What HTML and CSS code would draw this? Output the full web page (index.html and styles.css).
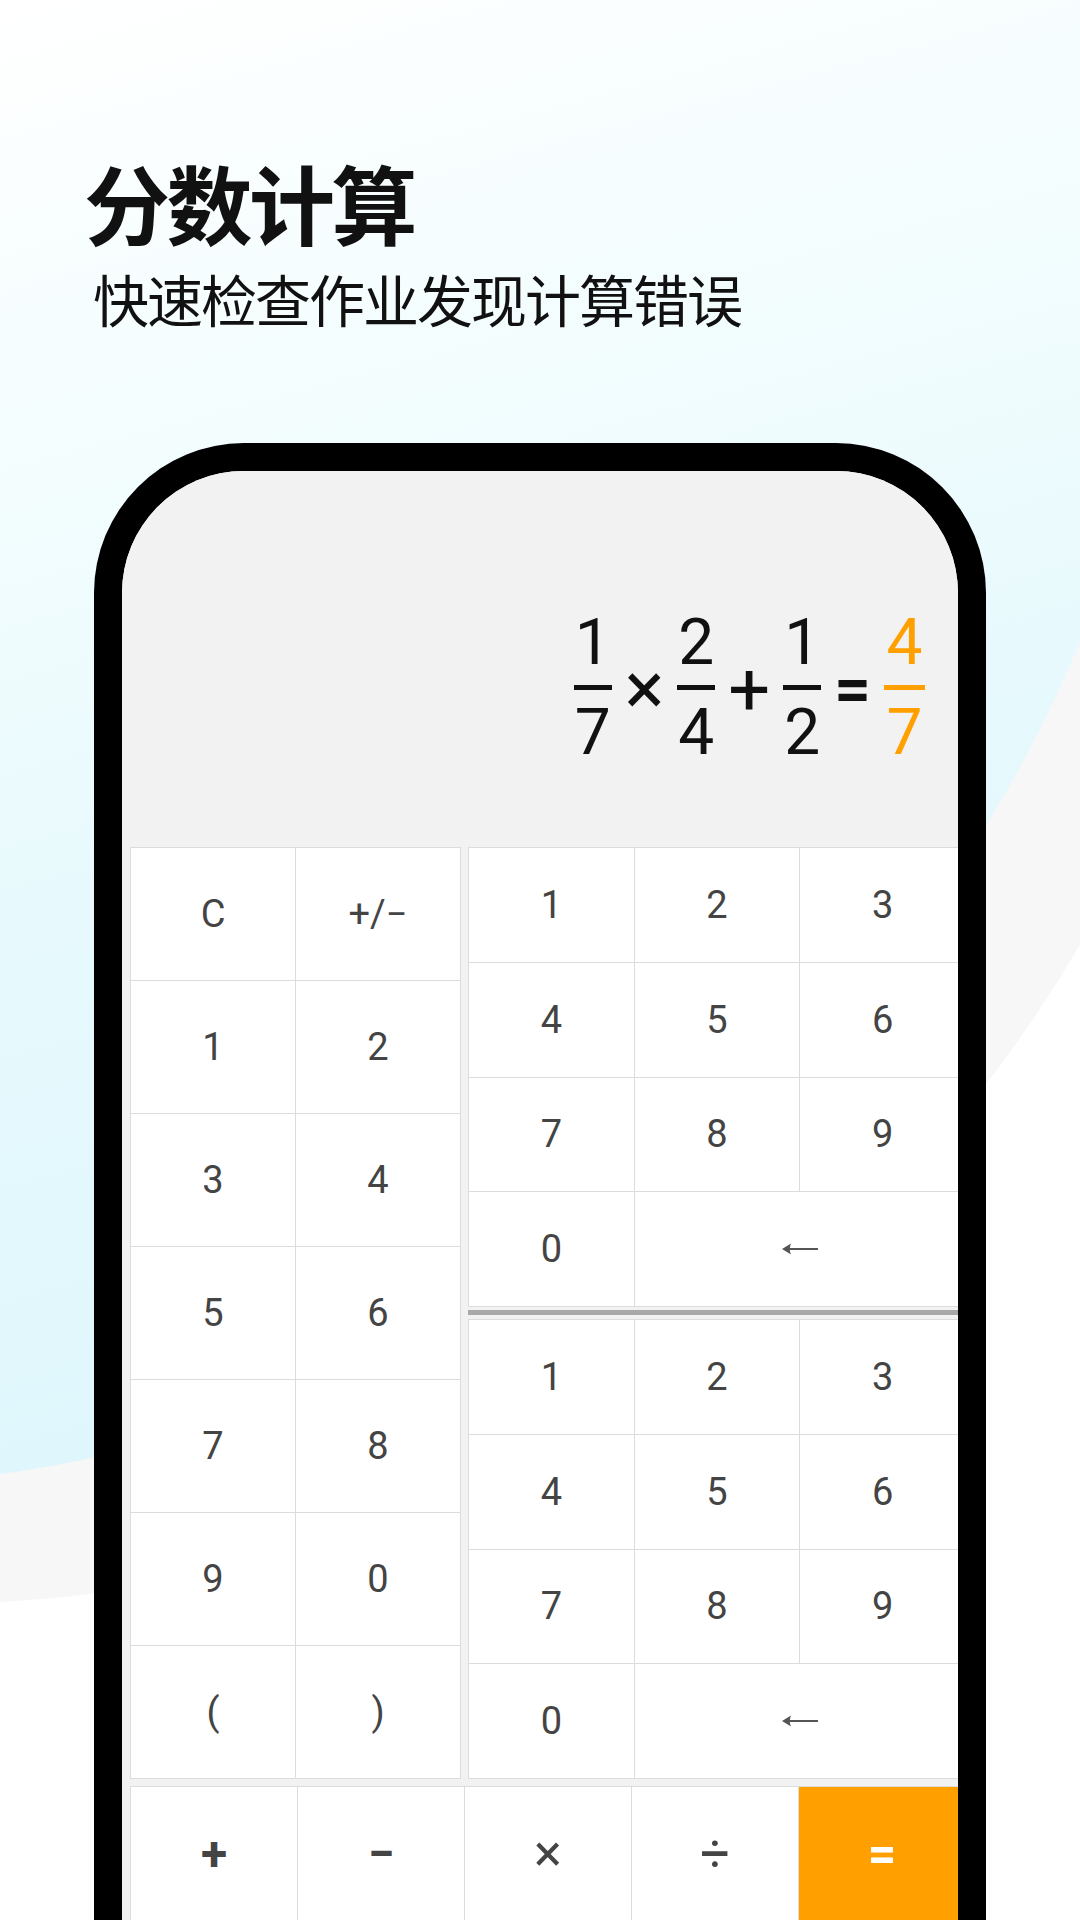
FILE: index.html
```html
<!DOCTYPE html>
<html lang="zh-CN">
<head>
<meta charset="utf-8">
<title>分数计算</title>
<link rel="stylesheet" href="styles.css">
</head>
<body>
<div class="page">
  <header class="header">
    <h1 class="title">分数计算</h1>
    <p class="subtitle">快速检查作业发现计算错误</p>
  </header>

  <div class="phone">
    <div class="screen">
      <div class="display">
        <div class="expr">
          <span class="frac"><span class="num">1</span><span class="bar"></span><span class="den">7</span></span>
          <span class="op op-times">×</span>
          <span class="frac"><span class="num">2</span><span class="bar"></span><span class="den">4</span></span>
          <span class="op op-plus">+</span>
          <span class="frac"><span class="num">1</span><span class="bar"></span><span class="den">2</span></span>
          <span class="op op-eq">=</span>
          <span class="frac result"><span class="num">4</span><span class="bar"></span><span class="den">7</span></span>
        </div>
      </div>

      <div class="keypad">
        <div class="main">
          <div class="left">
            <div class="key">C</div><div class="key">+/−</div>
            <div class="key">1</div><div class="key">2</div>
            <div class="key">3</div><div class="key">4</div>
            <div class="key">5</div><div class="key">6</div>
            <div class="key">7</div><div class="key">8</div>
            <div class="key">9</div><div class="key">0</div>
            <div class="key">(</div><div class="key">)</div>
          </div>
          <div class="right">
            <div class="block">
              <div class="key">1</div><div class="key">2</div><div class="key">3</div>
              <div class="key">4</div><div class="key">5</div><div class="key">6</div>
              <div class="key">7</div><div class="key">8</div><div class="key">9</div>
              <div class="key">0</div>
              <div class="key wide"><svg class="arrow" viewBox="0 0 38 16" width="38" height="16"><path d="M1 8 L10 2.5 Q7.5 8 10 13.5 Z" fill="#555"/><path d="M6 8 H37" stroke="#555" stroke-width="2"/></svg></div>
            </div>
            <div class="sep"><div class="sep-bar"></div></div>
            <div class="block">
              <div class="key">1</div><div class="key">2</div><div class="key">3</div>
              <div class="key">4</div><div class="key">5</div><div class="key">6</div>
              <div class="key">7</div><div class="key">8</div><div class="key">9</div>
              <div class="key">0</div>
              <div class="key wide"><svg class="arrow" viewBox="0 0 38 16" width="38" height="16"><path d="M1 8 L10 2.5 Q7.5 8 10 13.5 Z" fill="#555"/><path d="M6 8 H37" stroke="#555" stroke-width="2"/></svg></div>
            </div>
          </div>
        </div>
        <div class="ops">
          <div class="key bold">+</div>
          <div class="key bold">−</div>
          <div class="key big">×</div>
          <div class="key big">÷</div>
          <div class="key equals">=</div>
        </div>
      </div>
    </div>
  </div>
</div>
</body>
</html>
```

FILE: styles.css
```css
html, body {
  margin: 0;
  padding: 0;
  width: 1080px;
  height: 1920px;
  overflow: hidden;
}

body {
  font-family: "Noto Sans CJK SC", "Noto Sans", sans-serif;
  background:
    radial-gradient(circle at -68px 274px, rgba(255,255,255,0) 0, rgba(255,255,255,0) 1329px, #ffffff 1330px),
    radial-gradient(circle at -192px 108px, rgba(247,247,247,0) 0, rgba(247,247,247,0) 1379px, #f7f7f7 1380px),
    linear-gradient(165deg, #ffffff 0%, #f3fdfe 22%, #e6f9fd 45%, #def6fc 70%, #dbf5fc 100%);
}

.page {
  width: 1080px;
  height: 1920px;
  overflow: hidden;
}

.header {
  padding: 159px 0 0 84px;
}

.title {
  margin: 0;
  font-size: 86px;
  line-height: 86px;
  font-weight: 700;
  letter-spacing: -3.5px;
  color: #111;
}

.subtitle {
  margin: 25px 0 0 9px;
  font-size: 56px;
  line-height: 56px;
  font-weight: 400;
  letter-spacing: -2px;
  color: #111;
}

.phone {
  margin: 117px 0 0 94px;
  width: 892px;
  height: 1477px;
  box-sizing: border-box;
  border: 28px solid #000;
  border-bottom: 0;
  border-radius: 150px 150px 0 0;
  overflow: hidden;
  background: #f2f2f2;
}

.screen {
  height: 100%;
  background: #f2f2f2;
}

.display {
  height: 376px;
  box-sizing: border-box;
  padding: 140px 33px 0 0;
  display: flex;
  justify-content: flex-end;
  align-items: flex-start;
}

.expr {
  display: flex;
  align-items: center;
  gap: 13px;
  font-family: Roboto, "Noto Sans", sans-serif;
  color: #111;
}

.frac {
  display: flex;
  flex-direction: column;
  align-items: center;
  font-size: 64px;
  line-height: 64px;
}

.frac .bar {
  display: block;
  width: 38px;
  height: 5px;
  margin: 10px 0 11px;
  background: #111;
}

.frac.result {
  color: #ffa000;
}

.frac.result .bar {
  width: 41px;
  background: #ffa000;
}

.op {
  font-size: 64px;
  line-height: 64px;
  position: relative;
  top: 2px;
}

.op-times {
  font-size: 74px;
  font-weight: 400;
  top: 1px;
}

.op-plus {
  font-weight: 400;
  font-size: 74px;
}

.op-eq {
  font-weight: 700;
  font-size: 64px;
}

.keypad {
  margin-left: 8px;
  width: 836px;
  font-family: Roboto, "Noto Sans", sans-serif;
}

.main {
  display: flex;
  gap: 7px;
  height: 932px;
}

.left {
  width: 331px;
  display: grid;
  grid-template-columns: 1fr 1fr;
  grid-template-rows: repeat(7, 1fr);
  gap: 1px;
  padding: 1px;
  box-sizing: border-box;
  background: #dcdcdc;
}

.right {
  width: 498px;
  display: flex;
  flex-direction: column;
}

.block {
  height: 460px;
  display: grid;
  grid-template-columns: repeat(3, 1fr);
  grid-template-rows: repeat(4, 1fr);
  gap: 1px;
  padding: 1px;
  box-sizing: border-box;
  background: #dcdcdc;
}

.sep {
  height: 12px;
  box-sizing: border-box;
  padding: 3px 0 4px;
}

.sep-bar {
  height: 5px;
  background: #a8a8a8;
}

.key {
  background: #fff;
  display: flex;
  align-items: center;
  justify-content: center;
  font-size: 38px;
  color: #444;
}

.key.wide {
  grid-column: span 2;
}

.ops {
  margin-top: 7px;
  height: 140px;
  display: grid;
  grid-template-columns: repeat(5, 1fr);
  gap: 1px;
  padding: 1px 1px 0;
  box-sizing: border-box;
  background: #dcdcdc;
}

.ops .key {
  align-items: center;
  padding-bottom: 6px;
}

.ops .key.bold {
  font-weight: 700;
  font-size: 48px;
}

.ops .key.big {
  font-size: 52px;
}

.ops .key.equals {
  background: #ffa000;
  color: #fff;
  font-weight: 700;
  font-size: 50px;
}

.arrow {
  display: block;
}
```
